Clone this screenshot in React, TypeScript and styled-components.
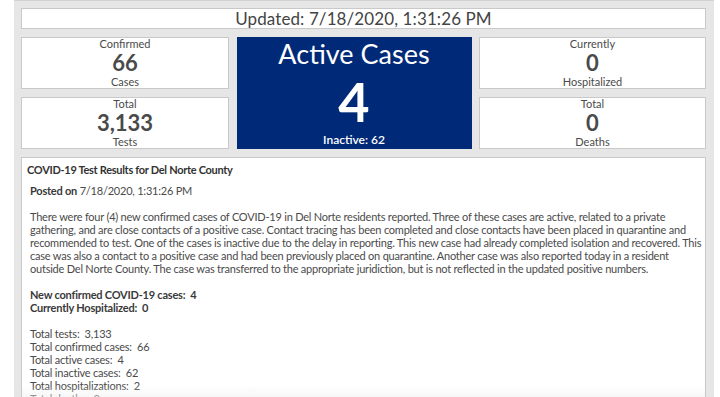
import React, { FC } from "react";
import styled, { createGlobalStyle } from "styled-components";

const GlobalStyle = createGlobalStyle`
  html, body {
    margin: 0;
    padding: 0;
    background: #ffffff;
    overflow: hidden;
  }
  body {
    font-family: "Lato", "Open Sans", sans-serif;
    color: #4c4c4c;
  }
`;

interface StatProps {
  top: string;
  value: string;
  bottom: string;
}

const StatCard: FC<StatProps> = ({ top, value, bottom }) => (
  <Card>
    <SmallLabel>{top}</SmallLabel>
    <BigValue>{value}</BigValue>
    <SmallLabel>{bottom}</SmallLabel>
  </Card>
);

// wrapped the way the dashboard wraps it
const paragraphLines = [
  "There were four (4) new confirmed cases of COVID-19 in Del Norte residents reported. Three of these cases are active, related to a private",
  "gathering, and are close contacts of a positive case. Contact tracing has been completed and close contacts have been placed in quarantine and",
  "recommended to test. One of the cases is inactive due to the delay in reporting. This new case had already completed isolation and recovered. This",
  "case was also a contact to a positive case and had been previously placed on quarantine. Another case was also reported today in a resident",
  "outside Del Norte County. The case was transferred to the appropriate juridiction, but is not reflected in the updated positive numbers.",
];

const totals = [
  "Total tests:\u00a0 3,133",
  "Total confirmed cases:\u00a0 66",
  "Total active cases:\u00a0 4",
  "Total inactive cases:\u00a0 62",
  "Total hospitalizations:\u00a0 2",
  "Total deaths:\u00a0 0",
];

const App: FC = () => {
  return (
    <Page>
      <GlobalStyle />
      <Dashboard>
        <UpdatedBar>Updated: 7/18/2020, 1:31:26 PM</UpdatedBar>
        <StatColumn>
          <StatCard top="Confirmed" value="66" bottom="Cases" />
          <StatCard top="Total" value="3,133" bottom="Tests" />
        </StatColumn>
        <ActiveCard>
          <ActiveTitle>Active Cases</ActiveTitle>
          <ActiveValue>4</ActiveValue>
          <ActiveFoot>Inactive: 62</ActiveFoot>
        </ActiveCard>
        <StatColumn>
          <StatCard top="Currently" value="0" bottom="Hospitalized" />
          <StatCard top="Total" value="0" bottom="Deaths" />
        </StatColumn>
        <TextPanel>
          <PanelTitle>COVID-19 Test Results for Del Norte County</PanelTitle>
          <PanelBody>
            <Para>
              <b>Posted on</b> 7/18/2020, 1:31:26 PM
            </Para>
            <Para>
              {paragraphLines.map(l => (
                <Line key={l}>{l}</Line>
              ))}
            </Para>
            <Para>
              <b>New confirmed COVID-19 cases:&nbsp; 4</b>
              <br />
              <b>Currently Hospitalized:&nbsp; 0</b>
            </Para>
            <Para>
              {totals.map(t => (
                <Line key={t}>{t}</Line>
              ))}
            </Para>
          </PanelBody>
          <Fade />
        </TextPanel>
      </Dashboard>
    </Page>
  );
};

const Page = styled.div`
  width: 720px;
  height: 397px;
  padding: 0 6px 0 14px;
  box-sizing: border-box;
  overflow: hidden;
`;

const Dashboard = styled.div`
  height: 100%;
  box-sizing: border-box;
  background: #e6e6e6;
  border-top: 1px solid #d2d2d2;
  padding: 7px 7px 0 7px;
  display: grid;
  grid-template-columns: 208px 235px 227px;
  grid-template-rows: 21px 112px 1fr;
  column-gap: 7.5px;
  row-gap: 8px;
`;

const UpdatedBar = styled.div`
  grid-column: 1 / 4;
  background: #ffffff;
  border: 1px solid #c9c9c9;
  box-sizing: border-box;
  display: flex;
  align-items: center;
  justify-content: center;
  font-size: 17px;
  font-weight: 400;
  color: #444444;
  letter-spacing: 0.1px;
`;

const StatColumn = styled.div`
  display: flex;
  flex-direction: column;
  gap: 8px;
`;

const Card = styled.div`
  flex: 1;
  background: #ffffff;
  border: 1px solid #c9c9c9;
  box-sizing: border-box;
  display: flex;
  flex-direction: column;
  align-items: center;
  justify-content: center;
  color: #4a4a4a;
`;

const SmallLabel = styled.div`
  font-size: 11px;
  line-height: 12px;
`;

const BigValue = styled.div`
  font-size: 22px;
  font-weight: 700;
  line-height: 26px;
  color: #4a4a4a;
`;

const ActiveCard = styled.div`
  background: #002a77;
  color: #ffffff;
  display: flex;
  flex-direction: column;
  align-items: center;
  padding: 1px 0 2px;
  box-sizing: border-box;
`;

const ActiveTitle = styled.div`
  font-size: 27px;
  line-height: 32px;
  font-weight: 400;
`;

const ActiveValue = styled.div`
  flex: 1;
  display: flex;
  align-items: center;
  font-size: 54px;
  font-weight: 700;
  line-height: 54px;
`;

const ActiveFoot = styled.div`
  font-size: 12px;
  line-height: 14px;
  font-weight: 600;
`;

const TextPanel = styled.div`
  grid-column: 1 / 4;
  position: relative;
  background: #ffffff;
  border: 1px solid #c9c9c9;
  border-bottom: none;
  box-sizing: border-box;
  padding: 5px 3px 0 5px;
  overflow: hidden;
  font-size: 11px;
  line-height: 13px;
  letter-spacing: -0.22px;
  color: #4a4a4a;
`;

const PanelTitle = styled.div`
  font-weight: 700;
  color: #333333;
  letter-spacing: -0.3px;
`;

const PanelBody = styled.div`
  padding: 8px 0 0 3px;
`;

const Para = styled.div`
  margin: 0 0 13px 0;
  b {
    font-weight: 700;
    color: #3a3a3a;
  }
`;

const Line = styled.div`
  white-space: nowrap;
`;

const Fade = styled.div`
  position: absolute;
  left: 0;
  right: 0;
  bottom: 0;
  height: 12px;
  background: linear-gradient(rgba(255, 255, 255, 0), rgba(238, 238, 238, 0.5));
`;

export default App;
